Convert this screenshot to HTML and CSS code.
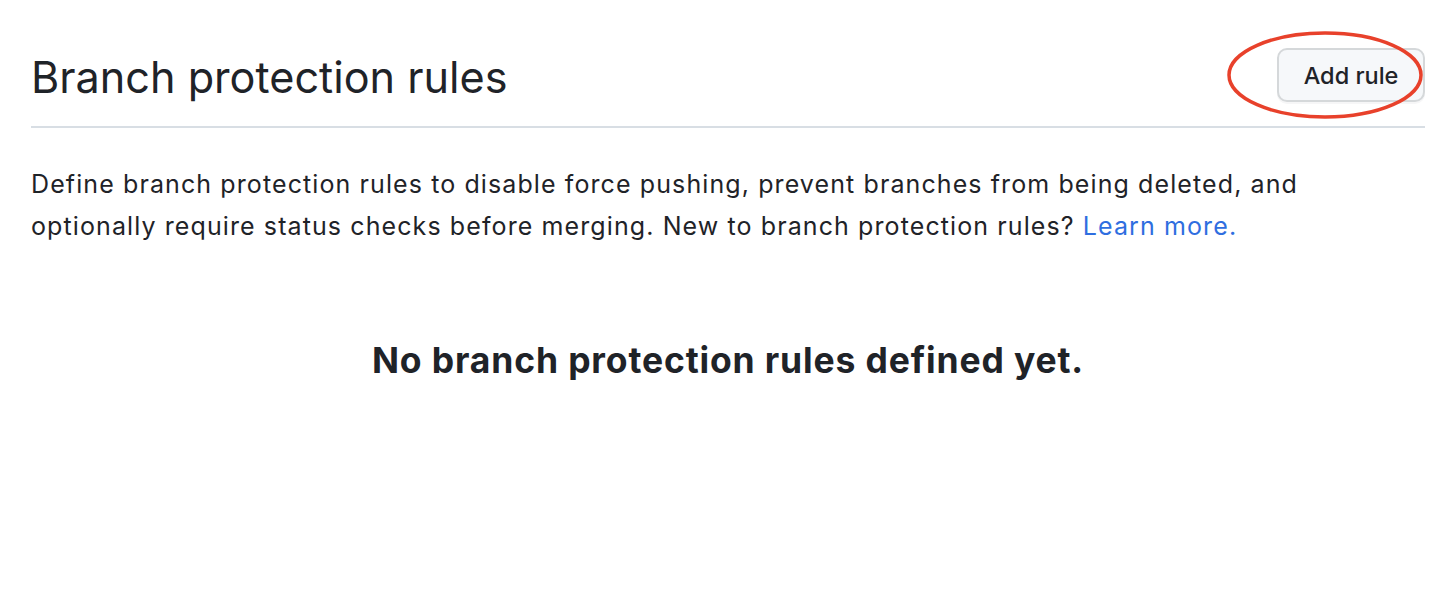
FILE: index.html
```html
<!DOCTYPE html>
<html lang="en">
<head>
<meta charset="utf-8">
<title>Branch protection rules</title>
<link rel="stylesheet" href="styles.css">
</head>
<body>
<div class="page">
  <div class="header">
    <h1 class="title">Branch protection rules</h1>
    <div class="actions">
      <button class="btn">Add rule</button>
      <svg class="circle" width="200" height="94" viewBox="0 0 200 94" aria-hidden="true">
        <ellipse cx="100" cy="47" rx="96" ry="42" fill="none" stroke="#e8412b" stroke-width="3.5"/>
      </svg>
    </div>
  </div>
  <p class="desc">Define branch protection rules to disable force pushing, prevent branches from being deleted, and optionally require status checks before merging. New to branch protection rules? <a href="#" class="link">Learn more.</a></p>
  <h3 class="empty">No branch protection rules defined yet.</h3>
</div>
</body>
</html>
```
FILE: styles.css
```css
html, body {
  margin: 0;
  background: #ffffff;
}
body {
  font-family: Inter, "Liberation Sans", Arial, sans-serif;
  color: #1f2328;
}
.page {
  padding: 30px 21px 0 31px;
}
.header {
  display: flex;
  align-items: center;
  justify-content: space-between;
  height: 96px;
  border-bottom: 2px solid #d8dee4;
}
.title {
  margin: 0 0 3px;
  font-size: 43.2px;
  font-weight: 400;
  line-height: 1.25;
}
.actions {
  position: relative;
  align-self: flex-start;
  margin-top: 18px;
}
.btn {
  display: block;
  width: 148px;
  height: 54px;
  padding: 0;
  font-family: inherit;
  font-size: 23.5px;
  font-weight: 500;
  color: #1f2328;
  background: #f6f8fa;
  border: 2px solid #d5d8da;
  border-radius: 10px;
  box-shadow: 0 2px 0 rgba(31,35,40,0.04);
}
.circle {
  position: absolute;
  left: -52px;
  top: -20px;
  pointer-events: none;
}
.desc {
  margin: 35px 0 0;
  font-size: 25px;
  letter-spacing: 1.1px;
  line-height: 42px;
}
.link {
  color: #2f6ee0;
  text-decoration: none;
}
.empty {
  margin: 90px 0 0;
  text-align: center;
  font-size: 35.5px;
  letter-spacing: 0.85px;
  font-weight: 700;
  line-height: 48px;
}
```
